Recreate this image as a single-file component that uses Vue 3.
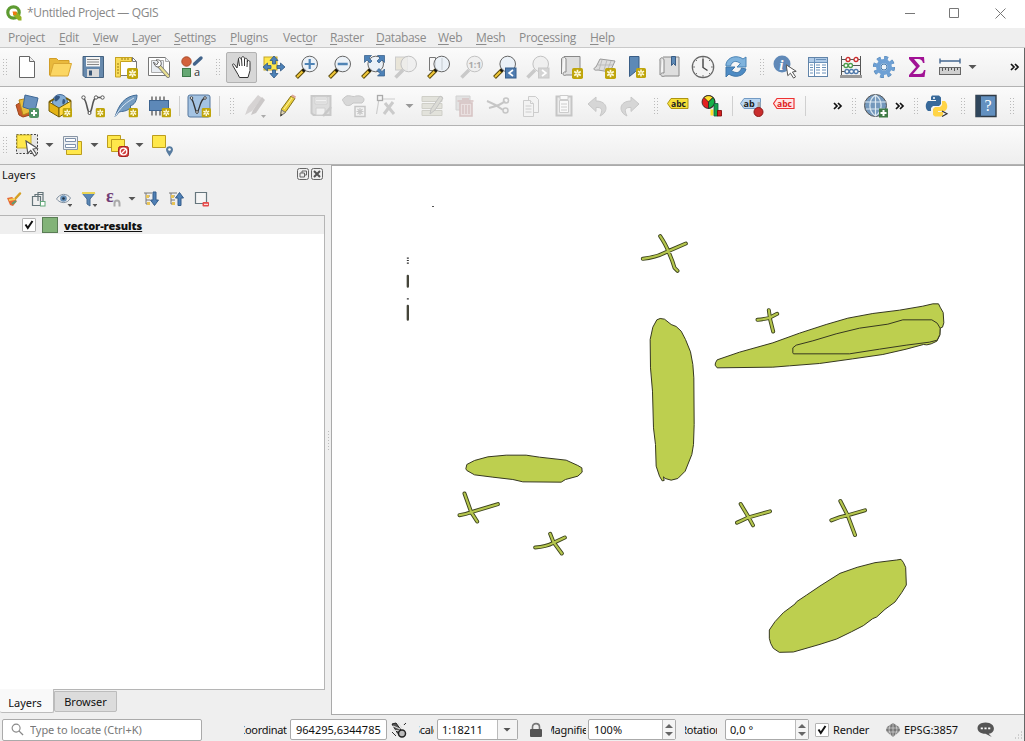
<script setup>
import { ref } from 'vue'

const menus = [
  ['', 'P', 'roject', 51, true], ['', 'E', 'dit', 34], ['', 'V', 'iew', 39], ['', 'L', 'ayer', 42],
  ['', 'S', 'ettings', 56], ['', 'P', 'lugins', 53], ['Vect', 'o', 'r', 47], ['', 'R', 'aster', 46],
  ['', 'D', 'atabase', 62], ['', 'W', 'eb', 38], ['', 'M', 'esh', 43], ['Pro', 'c', 'essing', 71], ['', 'H', 'elp', 40],
]
const bars = [
  ['grip', 'new', 'open', 'save', 'layout', 'manager', 'style', 'grip', 'hand', 'pansel', 'zoomin', 'zoomout', 'zoomfull', 'zoomsel', 'zoomlayer', 'zoomnative', 'zoomlast', 'zoomnext', 'newmap', 'new3d', 'bookmark', 'bookmarks', 'clock', 'refresh', 'grip', 'info', 'table', 'abacus', 'gear', 'sigma', 'ruler', 'arrow', 'fill', 'more'],
  ['grip', 'datasource', 'geopackage', 'vertex', 'feather', 'chip', 'sep', 'virtual', 'sep', 'grip', 'pencils', 'pencil', 'saveedit', 'blob', 'nodes', 'arrow', 'multiedit', 'trash', 'cut', 'copy', 'paste', 'undo', 'redo', 'grip', 'label', 'diagram', 'sep', 'labelpin', 'labelred', 'sep', 'gap', 'more', 'grip', 'globe', 'more', 'grip', 'python', 'grip', 'help', 'grip'],
  ['grip', 'select', 'arrow', 'selform', 'arrow', 'deselect', 'arrow', 'selloc'],
]
const plain = ['grip', 'sep', 'arrow', 'gap', 'fill', 'more']
const layerTools = ['brush', 'addgroup', 'eye', 'filter', 'epsilon', 'arrow', 'expand', 'collapse', 'remove']
const locate = ref('')
const visible = ref(true)
const render = ref(true)
</script>

<template>
  <div class="window">
    <svg class="defs" aria-hidden="true">
      <defs>
        <symbol id="star" viewBox="0 0 10 10"><rect width="10" height="10" rx="1.6" fill="#bfa50b" /><path d="M5 1.500v7M2 3.200l6 3.600M8 3.200L2 6.800" stroke="#fffbe0" stroke-width="1.500" /><circle cx="5" cy="5" r="1" fill="#d9c65a" /></symbol>
        <symbol id="plus" viewBox="0 0 10 10"><rect width="10" height="10" rx="2" fill="#4f9263" /><path d="M5 2v6M2 5h6" stroke="#fff" stroke-width="2" /></symbol>
        <symbol id="lens" viewBox="0 0 24 24"><path d="M9 15l-7.500 7.500" stroke="#5c4b0a" stroke-width="4" /><path d="M7.500 16.500l-5.500 5.500" stroke="#f2c93a" stroke-width="2" /><circle cx="9" cy="15" r="1.800" fill="#111" /><circle cx="14.700" cy="9" r="7.800" fill="#e8f0f7" fill-opacity=".8" stroke="#666" stroke-width="1" /></symbol>
        <symbol id="greylens" viewBox="0 0 24 24"><path d="M9 15l-7.500 7.500" stroke="#c9c9c9" stroke-width="3.500" /><circle cx="14.700" cy="9" r="7.800" fill="#eee" fill-opacity=".8" stroke="#c2c2c2" /></symbol>
        <symbol id="cursor" viewBox="0 0 12 15"><path d="M.7.8l1.600 10.900 2.600-2.500 3.200 4.900 2-1.300-3.200-4.800 3.800-.700z" fill="#fff" stroke="#555" /></symbol>

        <symbol id="new" viewBox="0 0 24 24"><path d="M4.500 1.500h10l5 5v16h-15z" fill="#fff" stroke="#666" /><path d="M14.500 1.500v5h5" fill="#eee" stroke="#666" /></symbol>
        <symbol id="open" viewBox="0 0 24 24"><path d="M1.500 20V3.500h7l2 2h10.500V10L18 20z" fill="#e9b93c" stroke="#d29e27" /><path d="M2 21L5.500 8.500h18L20 21z" fill="#fbd663" stroke="#d9a734" /></symbol>
        <symbol id="save" viewBox="0 0 24 24"><path d="M2 1.500h20.500v21H4l-2-2z" fill="#6689ad" stroke="#44617f" /><rect x="5" y="2" width="14" height="9.500" fill="#f5f5f5" /><path d="M6 4.500h12M6 7h12M6 9.500h12" stroke="#888" /><rect x="6" y="14" width="12" height="8" fill="#d9d9d9" /><rect x="8" y="15.500" width="3" height="5" fill="#395676" /></symbol>
        <symbol id="layout" viewBox="0 0 24 24"><path d="M1.500 2.500h17l4 4v14h-21z" fill="#fff" stroke="#777" /><path d="M18.500 2.500v4h4" fill="none" stroke="#777" /><path d="M1.500 2.500h16v4h-11V22h-5z" fill="#f8dc5a" stroke="#c7a31d" /><path d="M3 9h2M3 12h2M3 15h2M3 18h2M8 3v2M11 3v2M14 3v2" stroke="#9b7b10" /><use href="#star" x="13" y="13" width="11" height="11" /></symbol>
        <symbol id="manager" viewBox="0 0 24 24"><path d="M1.500 2.500h17l4 4v14h-21z" fill="#fff" stroke="#777" /><path d="M18.500 2.500v4h4M4.500 5.500h12v12h-12z" fill="#e9edf2" stroke="#aaa" /><path d="M12 11l9 10" stroke="#777" stroke-width="4" stroke-linecap="round" /><path d="M12.500 11.500l8.500 9.500" stroke="#e8df91" stroke-width="2.400" stroke-linecap="round" /><path d="M6.500 7l3 3 2-3-2.500-2c4-1 6 2 5 5-2 3-6 3-7.500-3z" fill="#fff" stroke="#666" /></symbol>
        <symbol id="style" viewBox="0 0 24 24"><circle cx="6.500" cy="6.500" r="4.700" fill="#d3623c" stroke="#a94b29" /><path d="M14.500 9l6.500-6" stroke="#42648b" stroke-width="3.400" stroke-linecap="round" /><rect x="2.500" y="13.500" width="8" height="8" fill="#66a874" stroke="#3c7a4a" /><text x="14" y="21" font-size="11" font-family="Open Sans, sans-serif" fill="#333">a</text></symbol>
        <symbol id="hand" viewBox="0 0 24 24"><path d="M8 13L5.500 9.500C3.800 8 3 9.500 4 11l5 8.500 1.500 3h8.500l2-7V7.500C21 5 18.500 5 18.300 7V5C18 2.500 15.500 3 15.500 5V3.500c-.3-2.500-3-2.500-3 0V5C12 2 9.500 2 9.500 4z" fill="#fff" stroke="#333" /><path d="M9.500 4l1 7M12.500 4l.5 7M15.500 4.500v6.500M18.300 6.500L18 12" fill="none" stroke="#333" /></symbol>
        <symbol id="pansel" viewBox="0 0 24 24"><rect x="2" y="2" width="13" height="13" fill="#ffe74d" stroke="#c4a526" /><path d="M12 1l4 4.500h-2.500V9h-3V5.500H8zM12 23l-4-4.500h2.500V15h3v3.500H16zM1 12l4.500-4v2.500H9v3H5.500V16zM23 12l-4.500 4v-2.500H15v-3h3.500V8z" fill="#4d82b8" stroke="#315984" stroke-width=".8" /></symbol>
        <symbol id="zoomin" viewBox="0 0 24 24"><use href="#lens" /><path d="M14.700 4v10M9.700 9h10" stroke="#4e83b5" stroke-width="2.200" /></symbol>
        <symbol id="zoomout" viewBox="0 0 24 24"><use href="#lens" /><path d="M9.700 9h10" stroke="#4e83b5" stroke-width="2.500" /></symbol>
        <symbol id="zoomfull" viewBox="0 0 24 24"><use href="#lens" /><path d="M3.500.5h7L8 3l3 3-2 2-3-3-2.500 2.500zM23.500.5v7L21 5l-3 3-2-2 3-3-2.500-2.500zM23.500 21h-7l2.500-2.500-3-3 2-2 3 3 2.500-2.500z" fill="#4d82b8" stroke="#315984" stroke-width=".7" /></symbol>
        <symbol id="zoomsel" viewBox="0 0 24 24"><rect x="1.500" y="2" width="12" height="13" fill="#e9e5d8" stroke="#ccc" /><use href="#greylens" /></symbol>
        <symbol id="zoomlayer" viewBox="0 0 24 24"><path d="M2.500 2.500h6v13h-6z" fill="#f7f7f7" stroke="#777" /><use href="#lens" /><path d="M15 3v12" stroke="#c5cbd0" /></symbol>
        <symbol id="zoomnative" viewBox="0 0 24 24"><use href="#greylens" /><text x="8.500" y="12.500" font-size="9" font-weight="700" font-family="Open Sans, sans-serif" fill="#aaa">1:1</text></symbol>
        <symbol id="zoomlast" viewBox="0 0 24 24"><use href="#lens" /><rect x="12.500" y="13" width="10.500" height="10" fill="#4f7cb0" stroke="#375e8c" /><path d="M20 15l-4 3 4 3" fill="none" stroke="#fff" stroke-width="1.600" /></symbol>
        <symbol id="zoomnext" viewBox="0 0 24 24"><use href="#greylens" /><rect x="12.500" y="13" width="10.500" height="10" fill="#d4d4d4" stroke="#c8c8c8" /><path d="M16 15l4 3-4 3" fill="none" stroke="#fff" stroke-width="1.600" /></symbol>
        <symbol id="newmap" viewBox="0 0 24 24"><path d="M5 1.500h16V20H7c-4 2-4-4 0-3V4c-1-3-5-2-4.500 1V19" fill="#dedede" stroke="#888" /><use href="#star" x="13" y="13" width="11" height="11" /></symbol>
        <symbol id="new3d" viewBox="0 0 24 24"><path d="M8 4l15 2-5 11-12-2c-5 1-5-2-2-3z" fill="#dedede" stroke="#999" /><path d="M10 5l-3 10M15 5l-3 10M19 6l-4 10M6 10h15" stroke="#bbb" fill="none" /><use href="#star" x="13" y="13" width="11" height="11" /></symbol>
        <symbol id="bookmark" viewBox="0 0 24 24"><path d="M4.500 1.500h9.500V17l-3.500-.5-6 5z" fill="#5d89b6" stroke="#395d86" /><use href="#star" x="11" y="13" width="10" height="10" /></symbol>
        <symbol id="bookmarks" viewBox="0 0 24 24"><path d="M5 2h16v19H7c-5 2-6-4-1-3V5c-1-4-5-2-4 1v14" fill="#dedede" stroke="#888" /><path d="M13.500 1.500h4v9l-2-2-2 2z" fill="#5d89b6" stroke="#395d86" /></symbol>
        <symbol id="clock" viewBox="0 0 24 24"><circle cx="12" cy="12" r="10.700" fill="#f4f4f4" stroke="#666" stroke-width="1.200" /><path d="M12 4v8.500l4.500 3" fill="none" stroke="#444" stroke-width="1.400" /><path d="M12 2v2M12 20v2M2 12h2M20 12h2M5 5l1 1M18 18l1 1M5 19l1-1M18 6l1-1" stroke="#777" /></symbol>
        <symbol id="refresh" viewBox="0 0 24 24"><path d="M2 9C4 1 14 0 19 4l3-2v10h-9l3.500-3.500C12 5 8 6 6.500 11H2z" fill="#7fb3dd" stroke="#4d85b6" /><path d="M22 14c-2 8-12 9-17 5l-3 3V12h9l-3.500 3.500C12 19 16 18 17.500 13z" fill="#4d8bc4" stroke="#3f76a8" /></symbol>
        <symbol id="info" viewBox="0 0 24 24"><circle cx="9" cy="9" r="8.500" fill="#6089b8" /><text x="6.200" y="14.500" font-size="15" font-style="italic" font-weight="700" font-family="Liberation Serif, serif" fill="#fff">i</text><use href="#cursor" x="12.500" y="9" width="12" height="15" /></symbol>
        <symbol id="table" viewBox="0 0 24 24"><rect x="2.500" y="2.500" width="19" height="19" fill="#fff" stroke="#6184a9" /><path d="M3 3h18v4H3z" fill="#afcae7" /><path d="M3 7.500h18M8.500 3v18M10 4.500h10M4 10h3M10 10h4M16 10h4M4 12.500h3M10 12.500h4M16 12.500h4M4 15h3M10 15h4M16 15h4M4 18h3M10 18h4M16 18h4" stroke="#6a91ba" /></symbol>
        <symbol id="abacus" viewBox="0 0 24 24"><path d="M2.500 1v22M21.500 1v22M3 4.500h18M3 10.500h18M3 16.500h18" stroke="#555" /><path d="M1 21.500h22" stroke="#999" stroke-width="3" /><g fill="#fff" stroke-width="1.300"><g stroke="#cc2c2c"><circle cx="9" cy="4.500" r="2" /><circle cx="17" cy="4.500" r="2" /></g><g stroke="#4c9c4c"><circle cx="7" cy="10.500" r="2" /><circle cx="11.500" cy="10.500" r="2" /></g><g stroke="#4f79ab"><circle cx="8" cy="16.500" r="2" /><circle cx="12.500" cy="16.500" r="2" /><circle cx="17" cy="16.500" r="2" /></g></g></symbol>
        <symbol id="gear" viewBox="0 0 24 24"><circle cx="12" cy="12" r="8.800" fill="none" stroke="#4b7eae" stroke-width="4.500" stroke-dasharray="3.500 3.411" /><circle cx="12" cy="12" r="5.700" fill="none" stroke="#6ea0d4" stroke-width="4.500" /><circle cx="12" cy="12" r="8.800" fill="none" stroke="#6ea0d4" stroke-width="3.500" stroke-dasharray="3.500 3.411" /><circle cx="12" cy="12" r="3" fill="#edf3f8" stroke="#4b7eae" /></symbol>
        <symbol id="sigma" viewBox="0 0 24 24"><path d="M4 2h15l.5 6H18c-1-3-2-4-5-4H9l6 7-7 8h6c3 0 4-1 5-4h1.500L19.500 22H4v-2l7-8-7-8z" fill="#a11295" /></symbol>
        <symbol id="ruler" viewBox="0 0 24 24"><path d="M2 6h20M2 3.500v5M22 3.500v5" stroke="#466891" stroke-width="1.400" /><rect x="1.500" y="12.500" width="21" height="7" fill="#d0d0d0" stroke="#666" /><path d="M4.500 13v3M7.500 13v2M10.500 13v3M13.500 13v2M16.500 13v3M19.500 13v2" stroke="#555" /></symbol>

        <symbol id="datasource" viewBox="0 0 24 24"><path d="M1 11l7-4 7 14-7 2-4-2z" fill="#c85b2b" stroke="#9c4319" /><path d="M4 6l10-2 4 13-10 4z" fill="#e9bd3c" stroke="#b5861a" /><path d="M10 1l13 3-3 13-12-4z" fill="#6891be" stroke="#3e6795" /><use href="#plus" x="14" y="14" width="10" height="10" /></symbol>
        <symbol id="geopackage" viewBox="0 0 24 24"><circle cx="12" cy="8" r="7.500" fill="#83add6" stroke="#446894" /><path d="M8 2c4-1 5 1 3 3S8 8 7 7 6 3 8 2m7 3c3 0 3 3 1 5s-2-3-1-5" fill="#345782" /><path d="M1 8l10 6v9L1 17z" fill="#e4b314" stroke="#735c08" /><path d="M11 14l12-7v9l-12 7z" fill="#ffd841" stroke="#735c08" /><path d="M1 8l5-3M23 7l-5-3" stroke="#735c08" stroke-width="2" /><use href="#star" x="14.500" y="14" width="9.500" height="9.500" /></symbol>
        <symbol id="vertex" viewBox="0 0 24 24"><path d="M2.500 4c4 4 3 12 6 15.500C12 16 11 5 15 3.500h6" fill="none" stroke="#555" stroke-width="1.600" /><g fill="#fff" stroke="#555"><circle cx="2.500" cy="3.500" r="1.700" /><circle cx="15" cy="3.500" r="1.700" /><circle cx="21.500" cy="3.500" r="1.700" /><circle cx="8.500" cy="19" r="1.500" /></g><use href="#star" x="14.500" y="14" width="9.500" height="9.500" /></symbol>
        <symbol id="feather" viewBox="0 0 24 24"><path d="M1 23C5 10 11 2 23 1c0 6-3 10-7 11l1 1c-4 5-9 4-12 5z" fill="#769dc2" stroke="#406a96" /><path d="M1 23C7 12 13 8 20 4" fill="none" stroke="#d7e5f2" /><use href="#star" x="14.500" y="14" width="9.500" height="9.500" /></symbol>
        <symbol id="chip" viewBox="0 0 24 24"><path d="M5 2.500v19M9 2.500v19M13 2.500v19M17 2.500v19" stroke="#555" stroke-width="1.300" /><rect x="2.500" y="6.500" width="19" height="10" fill="#5d88b8" stroke="#3c6390" /><use href="#star" x="14.500" y="14" width="9.500" height="9.500" /></symbol>
        <symbol id="virtual" viewBox="0 0 24 24"><rect x="1" y="1" width="22" height="22" rx="2" fill="#a4c3e2" stroke="#54779d" /><path d="M4 4c4 5 3 11 6 15C13 15 13 5 18 4" fill="none" stroke="#333" stroke-width="1.300" /><g fill="#fff" stroke="#444"><circle cx="4.500" cy="4" r="1.300" /><circle cx="18" cy="4" r="1.300" /><circle cx="10" cy="18" r="1.300" /></g><use href="#star" x="14.500" y="14" width="9.500" height="9.500" /></symbol>
        <symbol id="pencils" viewBox="0 0 24 24"><path d="M2 21L5 13 15 1l4 3L9 17z" fill="#d6d3d3" /><path d="M8 21l2-5L19 3l3 3-9 13z" fill="#cbc8c8" /><path d="M18 21h5l-2.500 3z" fill="#aaa" /></symbol>
        <symbol id="pencil" viewBox="0 0 24 24"><path d="M4.500 22l1-7L15 2l4 2.500-9 13z" fill="#e9cf3c" stroke="#857219" /><path d="M15 2l4 2.500 1-2-3.500-2z" fill="#dca79a" /><path d="M4.500 22l1-6 4 2.500z" fill="#ded2b0" stroke="#777" /><path d="M4.500 22l.5-2 1.500 1z" fill="#222" /><path d="M8 15l8-11" stroke="#fff3a1" /></symbol>
        <symbol id="saveedit" viewBox="0 0 24 24"><path d="M2.500 2h19v19h-17l-2-2z" fill="#ddd" stroke="#c9c9c9" stroke-width="2" /><path d="M6 3h12v7H6zM7 14h9v7H7z" fill="#f1f1f1" stroke="#d0d0d0" /><path d="M7 5h10M7 8h10" stroke="#ccc" /><path d="M14 22l8-9" stroke="#c8c8c8" stroke-width="2.500" /></symbol>
        <symbol id="blob" viewBox="0 0 24 24"><path d="M2 4c4-5 8 0 12-2 8-1 10 4 6 7H11c-3 4-9 3-9-1C0 7 0 5 2 4z" fill="#d8d8d8" stroke="#c6c6c6" /><rect x="13" y="12.500" width="10" height="10" fill="#f3f3f3" stroke="#c6c6c6" stroke-width="1.500" /><path d="M18 14v7M14.500 17.500h7M15.500 15l5 5M20.500 15l-5 5" stroke="#c9c9c9" stroke-width="1.200" /></symbol>
        <symbol id="nodes" viewBox="0 0 24 24"><path d="M1.500 20L4 5h16" fill="none" stroke="#cdcdcd" stroke-width="1.200" /><rect x="2.500" y="1.500" width="5" height="5" fill="#f4f4f4" stroke="#aaa" stroke-width="1.300" /><path d="M9 20L18 8M10 9l9 11" stroke="#cbcbcb" stroke-width="3" /></symbol>
        <symbol id="multiedit" viewBox="0 0 24 24"><path d="M2 2.500h20v5H2zM2 9.500h20v5H2zM2 16.500h20v5H2z" fill="#e2e2db" stroke="#cfcfc8" /><path d="M10 20l1-5L20 2l3 2-8 12z" fill="#dbdbd5" stroke="#c3c3c3" /></symbol>
        <symbol id="trash" viewBox="0 0 24 24"><path d="M3 2h14v14H3z" fill="#e2e2e2" stroke="#d2d2d2" /><path d="M7 9h12V22H7zM4.500 7h16M9 5h7" fill="#e9e0e0" stroke="#d6c2c2" stroke-width="1.500" /><path d="M10 11v9M13 11v9M16 11v9" stroke="#d3bcbc" stroke-width="1.200" /></symbol>
        <symbol id="cut" viewBox="0 0 24 24"><g fill="none" stroke="#c6c6c6"><path d="M1 7c8 3 12 6 16 9M3 14C12 12 17 9 19 7" stroke-width="2" /><circle cx="20" cy="6.500" r="2.500" stroke-width="1.500" /><circle cx="19.500" cy="16.500" r="2.500" stroke-width="1.500" /></g></symbol>
        <symbol id="copy" viewBox="0 0 24 24"><g fill="#f3f3f3" stroke="#cdcdcd"><path d="M9.500 2.500h7l3 3v13h-10z" /><path d="M4.500 6.500h7l3 3v13h-10z" /><path d="M11.500 6.500v3h3M6.500 12h6M6.500 15h6M6.500 18h6" /></g></symbol>
        <symbol id="paste" viewBox="0 0 24 24"><path d="M4.500 2.500h15v19h-15z" fill="#ececec" stroke="#c6c6c6" stroke-width="2" /><path d="M7.500 6.500h9v12h-9zM8 1.500h8v4H8zM9 10h6M9 13h6M9 16h6" fill="#f9f9f9" stroke="#ccc" /></symbol>
        <symbol id="undo" viewBox="0 0 24 24"><path d="M3 10L11 3v4c12 0 13 11 4 15 3-6 2-9-4-8.500v4z" fill="#d6d6d6" stroke="#c8c8c8" /></symbol>
        <symbol id="redo" viewBox="0 0 24 24"><path d="M21 10L13 3v4C1 7 0 18 9 22c-3-6-2-9 4-8.500v4z" fill="#d6d6d6" stroke="#c8c8c8" /></symbol>
        <symbol id="label" viewBox="0 0 24 24"><path d="M.5 9.500L4 4.500h17v10H4z" fill="#f6df38" stroke="#ad9411" /><text x="4" y="12.500" font-size="8.500" font-weight="700" font-family="Open Sans, sans-serif" fill="#222">abc</text></symbol>
        <symbol id="diagram" viewBox="0 0 24 24"><circle cx="8.500" cy="8" r="6.500" fill="#e32020" stroke="#222" stroke-width=".8" /><path d="M8.500 8L4 3.500C6.500 1 10.500 1 13 3.500z" fill="#ffe02c" stroke="#222" stroke-width=".8" /><path d="M8.500 8l4.500-4.500c3 3 2.500 9-4.500 11z" fill="#17b049" stroke="#222" stroke-width=".8" /><path d="M10.500 15.500h3v6h-3z" fill="#ffe02c" /><path d="M14 9.500h4V22h-4z" fill="#17a34a" stroke="#154" stroke-width=".8" /><path d="M17.500 16.500h4V22h-4z" fill="#d52020" stroke="#700" stroke-width=".8" /></symbol>
        <symbol id="labelpin" viewBox="0 0 24 24"><path d="M.5 9.500L4 4.500h16.500v10H4z" fill="#bad6f1" stroke="#739bc4" /><text x="3.500" y="12.500" font-size="9" font-weight="700" font-family="Open Sans, sans-serif" fill="#222">ab</text><path d="M19 8v8" stroke="#aaa" stroke-width="3" /><circle cx="18.500" cy="18" r="4.500" fill="#c92d2d" stroke="#8d1818" /></symbol>
        <symbol id="labelred" viewBox="0 0 24 24"><path d="M.5 9.500L4 4.500h17v10H4z" fill="#ffe5e5" stroke="#ed3232" stroke-width="1.200" /><text x="4" y="12.500" font-size="8.500" font-weight="700" font-family="Open Sans, sans-serif" fill="#d22">abc</text></symbol>
        <symbol id="globe" viewBox="0 0 24 24"><circle cx="11.500" cy="11.500" r="11" fill="#7498bc" stroke="#555" /><path d="M11.500 1v21M1 8h21M2 15h19M11.500 1C4 6 4 17 11.500 22M11.500 1C19 6 19 17 11.500 22" fill="none" stroke="#dce8f1" stroke-width="1.200" /><rect x="15" y="14.500" width="9" height="9" fill="#3f7b45" /><path d="M19.500 16v6M16.500 19h6" stroke="#fff" stroke-width="2" /></symbol>
        <symbol id="python" viewBox="0 0 24 24"><path d="M7 1.500h7l2 2V10l-2 2H8l-2 2v3H3c-3-2-3-8 0-10h8V6H6V3z" fill="#38699a" /><path d="M17 7h3c3 3 3 8 0 10h-7v1h5v3l-2 1.500h-6L8 21v-6l2-2h5l2-2z" fill="#ffd447" /><circle cx="9" cy="4" r="1" fill="#fff" /><path d="M17 17l5 2.800-5 2.700" fill="none" stroke="#333" stroke-width="1.200" /></symbol>
        <symbol id="help" viewBox="0 0 24 24"><path d="M2 1.500h20v21H2z" fill="#6290c0" stroke="#303a44" stroke-width="1.400" /><path d="M2 1h5v22H2z" fill="#30465c" /><text x="10.500" y="17" font-size="16" font-family="Liberation Serif, serif" fill="#fff">?</text></symbol>
        <symbol id="select" viewBox="0 0 24 24"><rect x="1.500" y="1.500" width="21" height="19" fill="#e6e6e6" stroke="#444" stroke-dasharray="2 1.500" /><path d="M2 2h14v13H2z" fill="#ffe84b" stroke="#c9b02b" /><use href="#cursor" x="10" y="7" width="14" height="17" /></symbol>
        <symbol id="selform" viewBox="0 0 24 24"><path d="M6.500 8.500h15v13h-15z" fill="#ffe84b" stroke="#bc9d1d" /><path d="M3.500 3.500h14v13h-14z" fill="#edf0f3" stroke="#8a96a5" /><path d="M5.500 5.500h10v3h-10zM5.500 11.500h10v3h-10z" fill="#fff" stroke="#7f91aa" /></symbol>
        <symbol id="deselect" viewBox="0 0 24 24"><path d="M2.500 2.500h13v12h-13z" fill="#ffe84b" stroke="#bc9d1d" /><path d="M6.500 6.500h13v12h-13z" fill="#ffe84b" stroke="#bc9d1d" /><rect x="13.500" y="13.500" width="10" height="10" rx="2" fill="#d34040" stroke="#a52020" /><circle cx="18.500" cy="18.500" r="3.300" fill="none" stroke="#fff" stroke-width="1.300" /><path d="M16 21l5-5" stroke="#fff" stroke-width="1.300" /></symbol>
        <symbol id="selloc" viewBox="0 0 24 24"><path d="M2.500 2.500h13v12h-13z" fill="#ffe84b" stroke="#bc9d1d" /><path d="M19.500 23.500c-1.500-3-3.500-4.500-3.500-7 0-4.500 7-4.500 7 0 0 2.500-2 4-3.500 7z" fill="#587ca0" /><circle cx="19.500" cy="16.500" r="1.300" fill="#fff" /></symbol>

        <symbol id="brush" viewBox="0 0 16 16"><path d="M9 8l5-5.500" stroke="#d4a026" stroke-width="2.500" stroke-linecap="round" /><path d="M1 7l5-1 5 4-4 5-3-1z" fill="#e66a37" /><path d="M3 9l6-1" stroke="#f8d157" stroke-width="2" /><path d="M6 13l4-3" stroke="#599d75" stroke-width="2" /></symbol>
        <symbol id="addgroup" viewBox="0 0 16 16"><path d="M1.500 5.500h8v9h-8zM4 5V3.500h8V13M7 10V1.500h5v4" fill="none" stroke="#65757a" stroke-width="1.200" /><rect x="9.500" y="10.500" width="4.500" height="4.500" fill="#fff" stroke="#62a779" /></symbol>
        <symbol id="eye" viewBox="0 0 16 16"><path d="M.5 8C4 2 11 2 14.500 7c-3 6-10 6-14 1z" fill="#eee" stroke="#8493a2" /><circle cx="7.500" cy="7.500" r="3.300" fill="#668fb7" /><circle cx="7.500" cy="7.500" r="1.300" fill="#234" /><path d="M11.500 13h5L14 16z" fill="#555" /></symbol>
        <symbol id="filter" viewBox="0 0 16 16"><path d="M1 2h13l-5 6v7l-3-2V8z" fill="#5a87b5" stroke="#446b94" /><path d="M1 1h13v2H1z" fill="#ead455" /><path d="M11.500 13h5L14 16z" fill="#555" /></symbol>
        <symbol id="epsilon" viewBox="0 0 16 16"><text x="0" y="10.500" font-size="18" font-weight="700" font-family="Liberation Serif, serif" fill="#714078">ε</text><path d="M8.500 15.500v-3c0-4 5-4 5 0v3" fill="none" stroke="#aaa" stroke-width="2" /></symbol>
        <symbol id="expand" viewBox="0 0 16 16"><path d="M3 2v11h4M3 5h4M3 9h4M1 2h8" fill="none" stroke="#777" /><path d="M3 4h3v3H3zM4 11h3v3H4z" fill="#e8c456" /><path d="M10 1h3v8h2.500l-4 5.500L7.500 9H10z" fill="#4f80b6" stroke="#345d8b" /></symbol>
        <symbol id="collapse" viewBox="0 0 16 16"><path d="M3 2v11h4M3 5h4M3 9h4M1 2h8" fill="none" stroke="#777" /><path d="M3 4h3v3H3zM4 11h3v3H4z" fill="#e8c456" /><path d="M10 14.500h3V7h2.500l-4-5.500L7.500 7H10z" fill="#4f80b6" stroke="#345d8b" /></symbol>
        <symbol id="remove" viewBox="0 0 16 16"><path d="M2.500 1.500h11v11h-11z" fill="#f5f5f5" stroke="#66767d" stroke-width="1.200" /><rect x="9.500" y="11" width="6.500" height="4.500" rx="1" fill="#e54a4a" /><path d="M11 13.300h4" stroke="#fff" /></symbol>
      </defs>
    </svg>

    <header class="title">
      <svg class="logo" viewBox="0 0 16 16"><circle cx="7.500" cy="7.500" r="5.700" fill="none" stroke="#5d9b31" stroke-width="3.200" /><path d="M7 7h4l4.500 5v3.500h-3L7 10z" fill="#93b023" /><path d="M6.500 6.500h4v3.500h-3z" fill="#ee7913" /></svg>
      <span>*Untitled Project — QGIS</span>
      <svg class="controls" viewBox="0 0 108 24"><path d="M2 12.500h10M46.500 7.500h9v9h-9zM92.500 7.500l10 10M102.500 7.500l-10 10" fill="none" stroke="#777" /></svg>
    </header>

    <nav class="menu">
      <span v-for="(m, i) in menus" :key="i" :style="{ width: m[3] + 'px' }">{{ m[0] }}<u :class="{ bare: m[4] }">{{ m[1] }}</u>{{ m[2] }}</span>
    </nav>

    <div v-for="(bar, b) in bars" :key="b" class="bar">
      <template v-for="(t, i) in bar" :key="i">
        <i v-if="t === 'grip'" class="grip"></i>
        <i v-else-if="t === 'arrow'" class="arrow" :class="{ dim: b === 1 }"></i>
        <svg v-else-if="t === 'more'" class="more" viewBox="0 0 16 9"><path d="M4 1l3 3-3 3M8 1l3 3-3 3" fill="none" stroke="#111" stroke-width="1.700" /></svg>
        <i v-else-if="plain.includes(t)" :class="t"></i>
        <span v-else class="tool" :class="{ active: t === 'hand' }"><svg viewBox="0 0 24 24"><use :href="'#' + t" /></svg></span>
      </template>
    </div>

    <main>
      <aside>
        <div class="dock-title"><span>Layers</span>
          <svg viewBox="0 0 26 12"><path d="M2.500.5h7q2 0 2 2v7q0 2-2 2h-7q-2 0-2-2v-7q0-2 2-2zM16.500.5h7q2 0 2 2v7q0 2-2 2h-7q-2 0-2-2v-7q0-2 2-2z" fill="none" stroke="#666" /><path d="M5 5V3h4.500v4H8M3 5h4.500v4H3z" fill="none" stroke="#666" /><path d="M17 3l6 6M23 3l-6 6" stroke="#555" stroke-width="2" /></svg>
        </div>
        <div class="layer-tools">
          <template v-for="(t, i) in layerTools" :key="i"><i v-if="t === 'arrow'" class="arrow"></i><svg v-else viewBox="0 0 16 16"><use :href="'#' + t" /></svg></template>
        </div>
        <div class="tree">
          <div class="row">
            <span class="check" @click="visible = !visible"><svg v-if="visible" viewBox="0 0 12 12"><path d="M2.500 5.500l2.300 3.500L9.500 2" /></svg></span>
            <i class="swatch"></i><b>vector-results</b>
          </div>
        </div>
        <div class="tabs"><span class="on">Layers</span><span>Browser</span></div>
      </aside>
      <div class="splitter"></div>
      <svg class="map" viewBox="331 165 694 550">
        <rect x="331.500" y="165.500" width="700" height="549" fill="#fff" stroke="#aaa" />
        <g transform="translate(639.500 224.500) scale(.33333)">
          <path class="area" d="M62 282L75 284 95 300 110 306 125 320 138 345 153 382 160 420 163 460 164 600 162 660 157 690 137 740 115 762 95 767 77 762 72 757 74 768 68 769 60 755 50 725 48 660 42 610 39 500 33 430 32 345 40 308 52 286z" />
          <path class="area" d="M228 415L233 406 300 383 400 355 480 326 560 300 625 281 700 267 780 257 850 245 880 238 897 238 903 250 911 264 913 295 909 308 902 311 901 332 892 350 875 358 862 361 852 360 800 374 730 390 640 403 540 417 450 424 400 428 233 430 227 422z" />
          <path class="area" d="M460 385L460 370 470 362 520 349 590 328 660 311 745 299 790 286 877 286 893 296 902 311 901 330 893 347 870 353 800 362 720 374 630 388 462 388z" />
          <g v-for="k in ['edge', 'core']" :key="k" :class="k"><path d="M62 35Q80 62 86 80 98 105 105 130L114 139M10 103Q50 99 86 80L139 57M388 257L392 285 401 321M354 286Q375 284 390 280L413 268" /></g>
        </g>
        <g transform="translate(379.500 189.500) scale(.33333)">
          <path class="area" d="M259 838L262 825 285 813 325 802 380 797 440 797 480 803 560 812 595 828 607 835 608 848 595 860 558 870 545 878 430 877 400 870 340 863 285 856 262 843z" />
          <g v-for="k in ['edge', 'core']" :key="k" :class="k"><path d="M255 912L275 968 293 996M240 977Q260 974 275 968L355 944M512 1033L522 1058 547 1092M467 1074Q500 1072 522 1060L556 1044" /></g>
          <path d="M158 51h5M82 206h6M82 213h6M82 221h6M82 328h6" stroke="#333" stroke-width="3.500" />
          <path d="M85 259V291M85 349V390" stroke="#45453a" stroke-width="7" stroke-linecap="round" />
        </g>
        <g transform="translate(720 490) scale(.33333)">
          <path class="area" d="M148 420L165 395 190 368 225 342 230 335 260 315 300 288 360 250 Q410 230 465 218L530 210 543 208 550 217 557 232 559 285 545 308 525 336 495 358 470 381 458 386 430 407 395 425 350 447 300 463 255 476 220 486 178 487 160 475 152 460 148 445z" />
          <g v-for="k in ['edge', 'core']" :key="k" :class="k"><path d="M62 42L86 82 99 106M51 98Q70 90 86 82L150 64M361 33L383 76 405 135M334 91Q360 80 383 76L435 61" /></g>
        </g>
      </svg>
    </main>

    <footer>
      <label class="locator"><svg viewBox="0 0 14 14"><circle cx="5.500" cy="5.500" r="4.300" fill="none" stroke="#888" stroke-width="1.200" /><path d="M8.500 8.500L13 13" stroke="#888" stroke-width="1.400" /></svg><input v-model="locate" placeholder="Type to locate (Ctrl+K)" /></label>
      <span class="clip coord"><span>Coordinate</span></span>
      <span class="box coords">964295,6344785</span>
      <svg class="mouse" viewBox="0 0 16 16"><path d="M1 2l4-1 5 7-3 4z" fill="#555" stroke="#222" /><path d="M2 4l7 3M2 8l7 1M4 12h5M7 1l4 5M12 3l3-2" stroke="#ddd" stroke-width="1.200" /><circle cx="11" cy="11.500" r="3.500" fill="#bbb" stroke="#222" stroke-width="1.500" /><path d="M13 3l2-2M1 10l4 4" stroke="#333" /></svg>
      <span class="clip scale"><span>Scale</span></span>
      <span class="box combo">1:18211<em><i class="arrow"></i></em></span>
      <svg class="lock" viewBox="0 0 14 16"><path d="M3.500 8V5C3.500.5 10.500.5 10.500 5v3" fill="none" stroke="#777" stroke-width="1.600" /><rect x="1" y="7" width="12" height="8" rx="1" fill="#555" /></svg>
      <span class="clip magn"><span>Magnifier</span></span>
      <span class="box spin zoom">100%<em><svg viewBox="0 0 8 14"><path d="M0 5l4-4 4 4zM0 9h8l-4 4z" fill="#666" /></svg></em></span>
      <span class="clip rot"><span>Rotation</span></span>
      <span class="box spin angle">0,0 °<em><svg viewBox="0 0 8 14"><path d="M0 5l4-4 4 4zM0 9h8l-4 4z" fill="#666" /></svg></em></span>
      <span class="check" @click="render = !render"><svg v-if="render" viewBox="0 0 12 12"><path d="M2.500 5.500l2.300 3.500L9.500 2" /></svg></span>
      <span class="render">Render</span>
      <svg class="crs" viewBox="0 0 16 16"><path d="M8 1l6 4 1 3-1 2-6 5-6-5-1-2 1-3z" fill="#777" /><path d="M8 1v14M1 6h14M2 10h12M5 3L4 8l2 6M11 3l1 5-2 6" fill="none" stroke="#e7e7e7" stroke-width=".6" /></svg>
      <span class="epsg">EPSG:3857</span>
      <svg class="bubble" viewBox="0 0 16 16"><path d="M8 1.500c10 0 10 10 3 10.500l3 3-6-3C-2 12-2 1.500 8 1.500z" fill="#555" /><path d="M3.500 7h2M7 7h2M10.500 7h2" stroke="#fff" stroke-width="1.600" /></svg>
      <svg class="resize" viewBox="0 0 10 10"><path d="M8 1h1M8 4h1M5 4h1M8 7h1M5 7h1M2 7h1" stroke="#aaa" /></svg>
    </footer>
    <i class="edge-line"></i>
  </div>
</template>

<style>
body { margin: 0; overflow: hidden; }
</style>
<style scoped>
* { box-sizing: border-box; }
.window { position: relative; width: 1025px; height: 741px; display: flex; flex-direction: column; overflow: hidden; background: #efefef; color: #111; font: 11px/14px "Noto Sans", "Open Sans", sans-serif; }
.defs { position: absolute; width: 0; height: 0; }
svg { display: block; flex: none; }
.title { flex: none; height: 28px; background: #fff; display: flex; align-items: center; padding: 0 14px 3px 6px; color: #888; font: 12px/16px "Open Sans", sans-serif; letter-spacing: -.36px; }
.logo { width: 16px; height: 16px; margin-right: 5px; }
.controls { width: 108px; height: 24px; margin-left: auto; }
.menu { flex: none; height: 20px; display: flex; align-items: center; padding: 1px 0 0 8px; border-bottom: 1px solid #c9c9c9; color: #8b8b8b; font: 12px/16px "Open Sans", sans-serif; letter-spacing: -.33px; white-space: nowrap; }
.menu span { flex: none; }
.menu u { text-underline-offset: 2px; }
.menu .bare { text-decoration: none; }
.bar { flex: none; height: 39px; display: flex; align-items: center; background: linear-gradient(#fbfbfb, #eee); border-bottom: 1px solid #b3b3b3; }
.tool { width: 33px; height: 31px; flex: none; display: flex; align-items: center; justify-content: center; }
.tool svg { width: 24px; height: 24px; }
.tool.active { width: 31px; margin: 0 1px; background: #d7d7d7; border: 1px solid #b2b2b2; border-radius: 2px; }
.grip { width: 16px; height: 18px; flex: none; background: radial-gradient(circle, #bbb 35%, transparent 45%) 6px 0 / 3px 3px repeat-y, radial-gradient(circle, #bbb 35%, transparent 45%) 9px 0 / 3px 3px repeat-y; }
.bar > .grip:first-child { width: 10.5px; background-position: 2px 0, 5px 0; }
.sep { width: 7px; height: 20px; flex: none; background: linear-gradient(#d0d0d0, #d0d0d0) 3px 0 / 1px 100% no-repeat; }
.gap { width: 21px; flex: none; }
.fill { flex: 1; }
.more { width: 16px; height: 9px; }
.fill + .more { margin-right: 2px; }
.more + .grip { width: 14px; background-position: 5px 0, 8px 0; }
.tool + .more { margin: 0 0 0 -1px; }
.tool + .more + .grip { width: 13px; }
.arrow { width: 12px; height: 4px; flex: none; display: block; background: #555; clip-path: polygon(2px 0, 10px 0, 6px 4px); }
.arrow.dim { background: #999; }
main { flex: 1; min-height: 0; display: flex; }
aside { width: 325px; flex: none; display: flex; flex-direction: column; }
.dock-title { height: 20px; display: flex; align-items: center; justify-content: space-between; padding: 0 2px 2px 2px; }
.dock-title span { padding-top: 2px; }
.dock-title svg { width: 26px; height: 12px; }
.layer-tools { height: 30px; display: flex; align-items: center; gap: 9px; padding: 0 0 3px 6px; }
.layer-tools svg { width: 16px; height: 16px; }
.layer-tools .arrow { margin: 0 -4px 0 -5px; }
.tree { flex: 1; background: #fff; border: 1px solid #b5b5b5; border-left: 0; }
.row { height: 18px; background: #efefef; display: flex; align-items: center; padding-left: 22px; font-weight: 700; }
.check { width: 14px; height: 14px; flex: none; background: #fff; border: 1px solid #b4b4b4; border-radius: 1px; }
.check svg { width: 12px; height: 12px; fill: none; stroke: #111; stroke-width: 2; }
.swatch { width: 16px; height: 16px; margin: 0 6px; background: #82b378; border: 1px solid #5a7d55; }
.row b { padding-top: 2px; text-decoration: underline; letter-spacing: -.08px; }
.tabs { height: 25px; display: flex; align-items: flex-start; }
.tabs span { height: 21px; width: 63px; margin-top: 1px; text-align: center; line-height: 19px; background: #dcdcdc; border: 1px solid #bcbcbc; border-radius: 0 0 2px 2px; }
.tabs .on { width: 54px; height: 24px; margin-top: -1px; padding-right: 3px; line-height: 27px; background: #f9f9f9; border-top: 0; border-left: 0; }
.splitter { width: 6px; flex: none; align-self: center; height: 20px; background: radial-gradient(circle, #bbb 35%, transparent 45%) 2px 0 / 3px 3px repeat-y; }
.map { width: 694px; height: 550px; }
.area { fill: #bdcf4f; stroke: #35371f; stroke-width: 3; stroke-linejoin: round; }
.edge path { fill: none; stroke: #3e451d; stroke-width: 12; stroke-linecap: round; stroke-linejoin: round; }
.core path { fill: none; stroke: #b5c64d; stroke-width: 6.5; stroke-linecap: round; stroke-linejoin: round; }
footer { flex: none; height: 26px; display: flex; align-items: center; padding: 3px 0 0 2px; white-space: nowrap; }
footer > * { flex: none; }
.locator { width: 200px; height: 22px; display: flex; align-items: center; padding-left: 8px; background: #fff; border: 1px solid #aaa; border-radius: 2px; }
.locator svg { width: 13px; height: 13px; margin-right: 6px; }
.locator input { flex: 1; min-width: 0; padding: 0; border: 0; outline: 0; font: inherit; letter-spacing: -.05px; background: none; }
.locator input::placeholder { color: #777; }
.clip { display: flex; justify-content: center; overflow: hidden; letter-spacing: -.3px; }
.clip span { flex: none; }
.coord { width: 43px; margin: 0 3px 0 42px; }
.box { height: 21px; display: flex; align-items: center; padding-left: 5px; background: #fff; border: 1px solid #aaa; border-radius: 2px; }
.coords { width: 97px; }
.mouse { width: 16px; height: 16px; margin-left: 4px; }
.scale { width: 15px; margin: 0 3px 0 12px; }
.combo { width: 81px; padding-left: 4px; }
.box em { margin-left: auto; height: 19px; display: flex; align-items: center; border-left: 1px solid #bbb; background: #f4f4f4; }
.combo em { width: 20px; padding-left: 3px; }
.lock { width: 14px; height: 16px; margin-left: 11px; }
.magn { width: 35px; margin: 0 2px 0 8px; }
.spin em { width: 13px; justify-content: center; }
.spin svg { width: 8px; height: 14px; }
.zoom { width: 88px; }
.rot { width: 32px; margin: 0 8px 0 9px; }
.angle { width: 84px; padding-left: 4px; }
footer > .check { margin-left: 6px; }
.render { margin-left: 4px; width: 36px; letter-spacing: -.2px; }
.crs { width: 16px; height: 16px; margin-left: 16px; }
.epsg { margin-left: 3px; width: 55px; letter-spacing: -.1px; }
.bubble { width: 17px; height: 17px; margin-left: 18px; }
.resize { width: 10px; height: 10px; margin: 12px 0 0 19px; }
.edge-line { position: absolute; right: 0; top: 48px; bottom: 0; width: 1px; background: #666; }
</style>
